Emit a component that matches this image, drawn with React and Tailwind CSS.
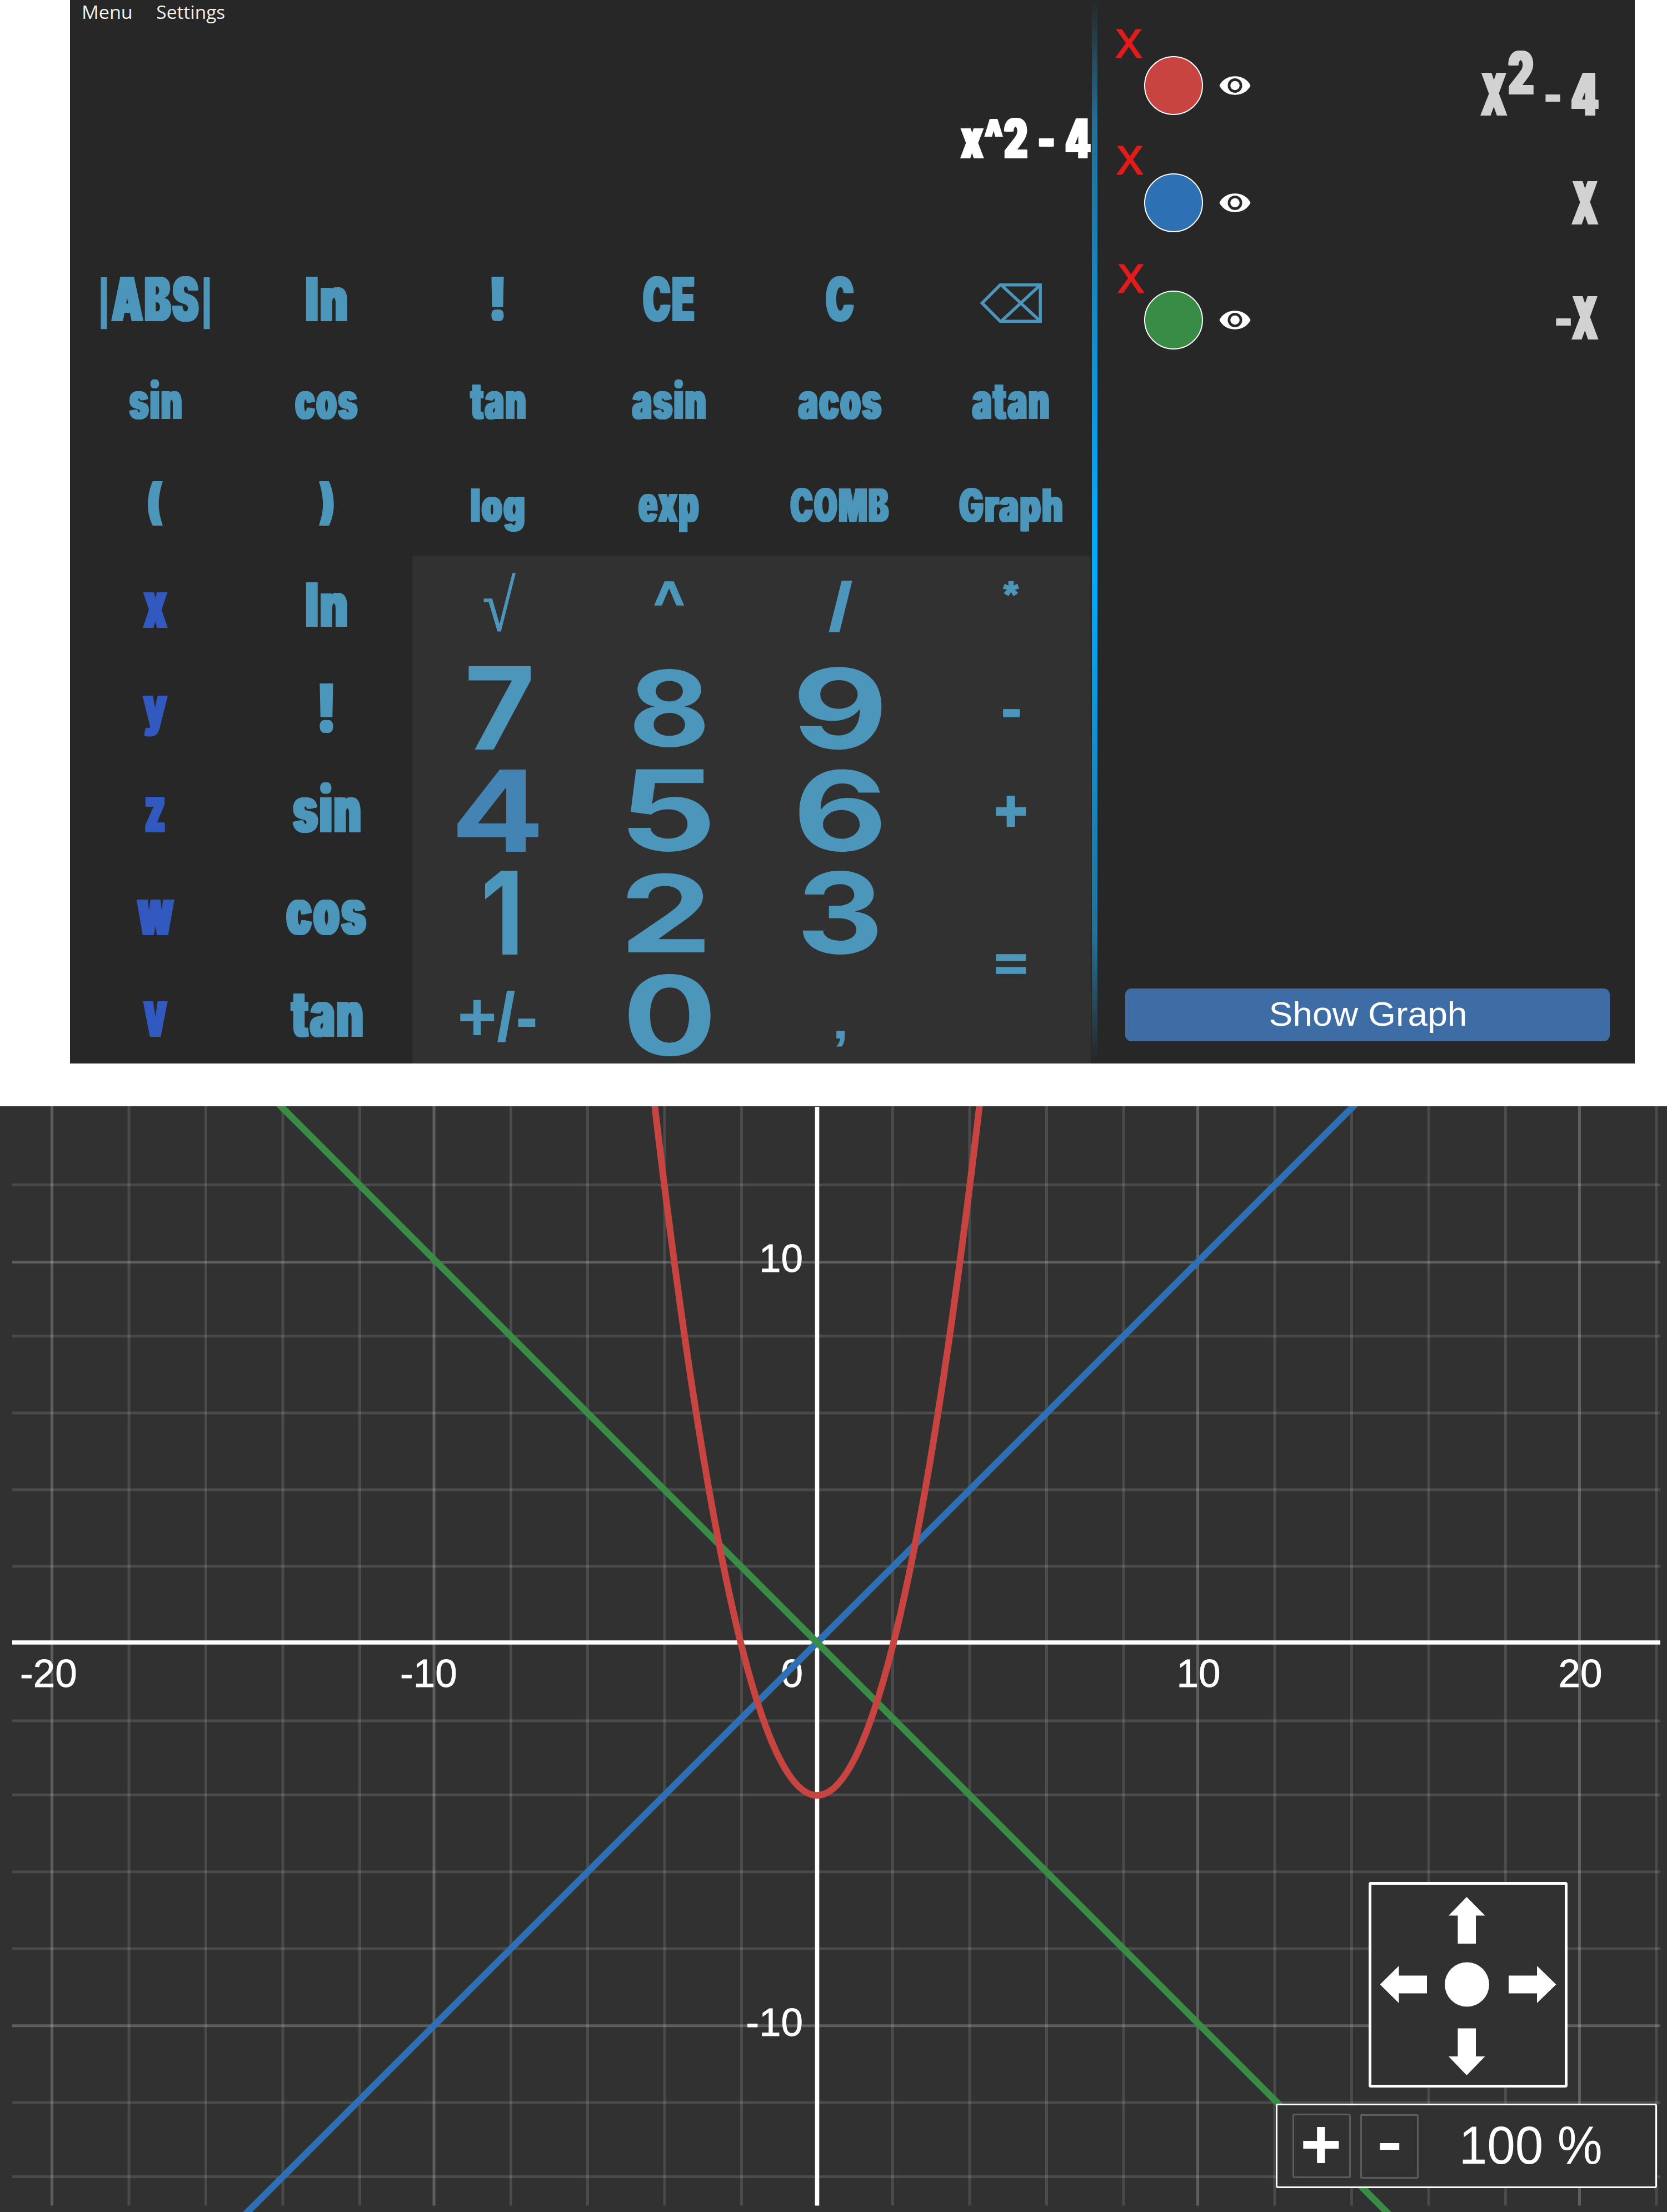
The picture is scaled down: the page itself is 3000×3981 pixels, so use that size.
import React from "react";

const FONTS = {
  heavy: {
    css: '900 100px "Inter"',
    cls: "font-['Inter'] font-black tracking-[5px] [text-shadow:2px_0_currentColor,-2px_0_currentColor,4px_0_currentColor,-4px_0_currentColor]",
    grow: 4,
    track: 5,
  },
  digit: { css: '700 100px "Inter"', cls: "font-['Inter'] font-bold" },
  sans: { css: '400 100px "Liberation Sans"', cls: "font-['Liberation_Sans'] font-normal" },
  bold: { css: '700 100px "Liberation Sans"', cls: "font-['Liberation_Sans'] font-bold" },
  thick: { css: '700 100px "Liberation Sans"', cls: "font-['Liberation_Sans'] font-bold [-webkit-text-stroke:4px_currentColor]", stroke: 4 },
  cross: { css: '400 100px "Liberation Sans"', cls: "font-['Liberation_Sans'] font-normal [-webkit-text-stroke:4px_currentColor]", stroke: 4 },
  serif: { css: '400 100px "Liberation Serif"', cls: "font-['Liberation_Serif'] font-normal [-webkit-text-stroke:1px_currentColor]", stroke: 1 },
  menu: { css: '400 100px "Open Sans"', cls: "font-['Open_Sans'] font-normal" },
};

const ctx = document.createElement("canvas").getContext("2d");
function measure(text, css) {
  ctx.font = css;
  return ctx.measureText(text);
}

/* Text whose ink is w wide; h is the height of `by` above the baseline, or of the whole ink when `by` is absent. */
function Fit({ text, w, h, by, font = "heavy", dx = 0, mt = 0, className = "" }) {
  const f = FONTS[font];
  const s = (f.stroke || 0) / 2;
  const grow = s + (f.grow || 0);
  const m = measure(text, f.css);
  const r = by ? measure(by, f.css) : m;
  const left = -m.actualBoundingBoxLeft - grow;
  const right = m.actualBoundingBoxRight + grow + (f.track || 0) * (text.length - 1);
  const asc = r.actualBoundingBoxAscent + s;
  const desc = (by ? 0 : m.actualBoundingBoxDescent) + s;
  const sx = w / (right - left);
  const sy = h / (asc + desc);
  const base = (m.fontBoundingBoxAscent - m.fontBoundingBoxDescent) / 2;
  const transform = `translate(${dx - left * sx}px, ${(asc - base) * sy}px) scale(${sx}, ${sy})`;
  return (
    <div className={`flex-none ${className}`} style={{ width: w, height: h, marginTop: mt }}>
      <span className={`block w-max origin-top-left text-[100px] leading-[0] whitespace-pre ${f.cls}`} style={{ transform }}>
        {text}
      </span>
    </div>
  );
}

/* t: label, w/h: ink size, b: bottom of the ink from the top of the key */
const KEYS = [
  { abs: true },
  { t: "ln", w: 75, h: 80, b: 131, by: "l" },
  { t: "!", w: 23, h: 80, b: 131 },
  { t: "CE", w: 93, h: 80, b: 131, by: "H" },
  { t: "C", w: 51, h: 80, b: 131, by: "H" },
  { back: true, end: 1 },

  { t: "sin", w: 95, h: 50, b: 122, by: "x" },
  { t: "cos", w: 113, h: 50, b: 122, by: "x" },
  { t: "tan", w: 101, h: 50, b: 122, by: "x" },
  { t: "asin", w: 133, h: 50, b: 122, by: "x" },
  { t: "acos", w: 151, h: 50, b: 122, by: "x" },
  { t: "atan", w: 139, h: 50, b: 122, by: "x", end: 1 },

  { t: "(", w: 27, h: 80, b: 131 },
  { t: ")", w: 27, h: 80, b: 131 },
  { t: "log", w: 97, h: 60, b: 123, by: "l" },
  { t: "exp", w: 109, h: 50, b: 123, by: "x" },
  { t: "COMB", w: 178, h: 60, b: 123, by: "H" },
  { t: "Graph", w: 186, h: 60, b: 123, by: "H", end: 1 },

  { t: "x", w: 45, h: 64, b: 131, v: 1 },
  { t: "ln", w: 75, h: 80, b: 129, by: "l" },
  { t: "√", w: 58, h: 107, b: 138, pad: 1, font: "serif", dx: 3 },
  { t: "^", w: 53, h: 44, b: 90, pad: 1, font: "thick" },
  { t: "/", w: 44, h: 93, b: 137, pad: 1, font: "bold" },
  { t: "*", w: 29, h: 27, b: 73, pad: 1, font: "thick", end: 1 },

  { t: "y", w: 46, h: 74, b: 142, v: 1 },
  { t: "!", w: 25, h: 89, b: 136 },
  { t: "7", w: 114, h: 151, b: 166, pad: 1, font: "digit", dx: 3 },
  { t: "8", w: 129, h: 141, b: 162, pad: 1, font: "digit" },
  { t: "9", w: 152, h: 151, b: 166, pad: 1, font: "digit" },
  { t: "-", w: 32, h: 15, b: 107, pad: 1, font: "bold", end: 1 },

  { t: "z", w: 36, h: 64, b: 131, v: 1 },
  { t: "sin", w: 123, h: 63, b: 131, by: "x" },
  { t: "4", w: 150, h: 149, b: 166, pad: 1, font: "digit", lit: 1 },
  { t: "5", w: 149, h: 149, b: 166, pad: 1, font: "digit" },
  { t: "6", w: 150, h: 149, b: 166, pad: 1, font: "digit" },
  { t: "+", w: 55, h: 56, b: 120, pad: 1, font: "thick", end: 1 },

  { t: "w", w: 69, h: 64, b: 132, v: 1 },
  { t: "cos", w: 145, h: 63, b: 131, by: "x" },
  { t: "1", w: 60, h: 152, b: 167, pad: 1, font: "digit", dx: 6 },
  { t: "2", w: 141, h: 143, b: 163, pad: 1, font: "digit", dx: -6 },
  { t: "3", w: 136, h: 152, b: 167, pad: 1, font: "digit", dx: -1 },
  { t: "=", w: 55, h: 35, b: 201, pad: 1, font: "thick", tall: 1, end: 1 },

  { t: "v", w: 45, h: 64, b: 131, v: 1 },
  { t: "tan", w: 131, h: 63, b: 131, by: "x" },
  { t: "+/-", w: 136, h: 93, b: 139, pad: 1, font: "bold" },
  { t: "0", w: 149, h: 148, b: 166, pad: 1, font: "digit" },
  { t: ",", w: 17, h: 29, b: 148, pad: 1, font: "bold" },
];

function Backspace() {
  return (
    <svg className="mt-[62px] h-[71px] w-[111px] flex-none" viewBox="0 0 111 71" fill="none" stroke="currentColor" strokeWidth="5.5">
      <path d="M3.5 35.5 36 2.8H108.2V68.2H36Z" />
      <path d="M38 3 108 68M38 68 108 3" />
    </svg>
  );
}

function Abs() {
  return (
    <div className="flex items-start gap-[7px]">
      <Fit text="|" font="bold" w={12} h={94} mt={51} dx={-1} />
      <Fit text="ABS" w={158} h={80} by="H" mt={51} dx={-1} />
      <Fit text="|" font="bold" w={12} h={94} mt={51} />
    </div>
  );
}

function Key({ k }) {
  const color = k.v ? "text-[#3259c0]" : k.lit ? "text-[#4484b4]" : "text-[#4b96ba]";
  let face = null;
  if (k.back) face = <Backspace />;
  else if (k.abs) face = <Abs />;
  else face = <Fit text={k.t} w={k.w} h={k.h} by={k.by} font={k.font} dx={(k.dx || 0) - (k.pad ? 0 : 1)} mt={k.b - k.h} />;
  return (
    <button className={`flex items-start justify-center ${k.pad ? "bg-[#313131]" : ""} ${k.tall ? "row-span-2" : ""} ${k.end ? "pl-[10px]" : ""} ${color}`}>
      {face}
    </button>
  );
}

function Eye() {
  return (
    <svg className="h-[34px] w-[57px] flex-none" viewBox="0 0 57 34">
      <path d="M0.5 17C5 7.500 15 0.300 28.500 0.300S52 7.500 56.500 17C52 26.500 42 33.700 28.500 33.700S5 26.500 0.500 17Z" fill="#fff" />
      <circle cx="28.500" cy="17" r="13" fill="#272727" />
      <circle cx="28.500" cy="17" r="8.300" fill="#fff" />
    </svg>
  );
}

function Row({ cross, dot, children }) {
  return (
    <div className="flex h-[211px] items-start text-[#d2d2d2]">
      <div className={`w-[50px] flex-none text-[#e31b1b] ${cross}`}>
        <Fit text="X" font="cross" w={47} h={51} />
      </div>
      <div className={`mt-[49px] size-[106px] flex-none rounded-full border-[2.5px] border-white ${dot}`} />
      <div className="mt-[85px] ml-[29px]">
        <Eye />
      </div>
      <div className="mr-[65px] ml-auto flex items-start">{children}</div>
    </div>
  );
}

function Calculator() {
  return (
    <section className="flex h-[1914px] w-[1837px] flex-none flex-col">
      <nav className="flex h-[46px] flex-none gap-[47px] pl-[24px] text-[#f0f0f0]">
        <Fit text="Menu" font="menu" w={86} h={24} by="M" mt={10} />
        <Fit text="Settings" font="menu" w={121} h={24} by="M" mt={10} />
      </nav>
      <div className="flex h-[402px] flex-none items-start justify-end pt-[167px] text-white">
        <Fit text="x^2 - 4" w={235} h={72} by="4" />
      </div>
      <div className="grid flex-none grid-cols-[repeat(5,308px)_297px] grid-rows-[repeat(7,184px)_178px]">
        {KEYS.map((k, i) => (
          <Key key={i} k={k} />
        ))}
      </div>
    </section>
  );
}

function Expressions() {
  return (
    <aside className="flex flex-1 flex-col pt-[52px]">
      <Row cross="mt-px ml-[33px] mr-[1px]" dot="bg-[#c74440]">
        <Fit text="X" w={49} h={77} mt={80} />
        <Fit text="2" w={46} h={79} mt={40} className="ml-px" />
        <Fit text="-" w={27} h={13} mt={119} className="ml-[21px]" />
        <Fit text="4" w={49} h={77} mt={80} className="ml-[20px]" />
      </Row>
      <Row cross="mt-0 ml-[35px] mr-[-1px]" dot="bg-[#2d70b3]">
        <Fit text="X" w={49} h={78} mt={64} />
      </Row>
      <Row cross="mt-[2px] ml-[37px] mr-[-3px]" dot="bg-[#388c46]">
        <Fit text="-" w={27} h={13} mt={100} />
        <Fit text="X" w={49} h={78} mt={60} className="ml-px" />
      </Row>
      <button className="mt-auto mr-[45px] mb-[40px] ml-[50px] flex h-[95px] items-start justify-center rounded-[11px] bg-[#3e6ca4] text-white">
        <Fit text="Show Graph" font="sans" w={351} h={45} by="h" mt={22} />
      </button>
    </aside>
  );
}

const OX = 1470.5;
const OY = 965;
const U = 68.8;
const COLS = [93.5, 232, 370.5, 509, 647.5, 781, 919.3, 1057.5, 1196, 1334.5, 1606.5, 1745, 1883.5, 2022, 2155.5, 2294, 2432.5, 2571, 2709.5, 2842.5, 2981];
const MAJOR_COLS = [93.5, 781, 2155.5, 2842.5];
const ROWS = [141.5, 280.5, 413.5, 552, 690, 828, 1106, 1239.3, 1377.8, 1516, 1654.8, 1793, 1926.5];
const MAJOR_ROWS = [280.5, 1654.8];

function Plot() {
  return (
    <svg className="block h-[1990px] w-[3000px]" viewBox="0 0 3000 1990">
      <g stroke="#fff" strokeWidth="5">
        {COLS.map((x) => (
          <line key={x} x1={x} x2={x} y1="0" y2="1978.500" strokeOpacity={MAJOR_COLS.includes(x) ? 0.22 : 0.12} />
        ))}
        {ROWS.map((y) => (
          <line key={y} x1="22" x2="2988" y1={y} y2={y} strokeOpacity={MAJOR_ROWS.includes(y) ? 0.22 : 0.12} />
        ))}
      </g>
      <g stroke="#fff" strokeWidth="7.600">
        <line x1={OX} x2={OX} y1="1" y2="1978.500" />
        <line x1="22" x2="2988" y1={OY} y2={OY} />
      </g>
      <g fill="#fff" stroke="#fff" strokeWidth="0.8" fontFamily="Liberation Sans, sans-serif" fontSize="71">
        <text x="36" y="1044.5">-20</text>
        <text x="720" y="1044.5">-10</text>
        <text x="1445" y="1044.5" textAnchor="end">0</text>
        <text x="2157" y="1044.5" textAnchor="middle">10</text>
        <text x="2844" y="1044.5" textAnchor="middle">20</text>
        <text x="1445" y="298" textAnchor="end">10</text>
        <text x="1445" y="1672.5" textAnchor="end">-10</text>
      </g>
      <g fill="none" strokeWidth="12">
        <line x1={OX - 1100} y1={OY + 1100} x2={OX + 1100} y2={OY - 1100} stroke="#2d70b3" />
        <line x1={OX - 1100} y1={OY - 1100} x2={OX + 1100} y2={OY + 1100} stroke="#388c46" />
        <path d={`M${OX - 5 * U} ${OY - 21 * U}Q${OX} ${OY + 29 * U} ${OX + 5 * U} ${OY - 21 * U}`} stroke="#c74440" />
      </g>
    </svg>
  );
}

function PanPad() {
  return (
    <div className="absolute top-[1396px] left-[2463px] h-[370px] w-[358px] rounded-[4px] border-[5px] border-white bg-[#313131]">
      <svg className="size-full" viewBox="5 5 348 360" fill="#fff">
        <path d="M176.500 27 209.500 60.500H193V111H160.500V60.500H144Z" />
        <path d="M176.500 348 209.500 314H193V263.500H160.500V314H144Z" />
        <path d="M20.500 184.500 54.500 151V168.500H105V200.500H54.500V218Z" />
        <path d="M337.500 184.500 303 151V168.500H252V200.500H303V218Z" />
        <circle cx="177" cy="184.500" r="40" />
      </svg>
    </div>
  );
}

function ZoomBar() {
  return (
    <div className="absolute top-[1795px] left-[2296px] flex h-[152px] w-[686px] items-start rounded-[4px] border-[3px] border-white bg-[#313131] text-white">
      <button className="mt-[15px] ml-[27px] flex h-[116px] w-[105px] items-start justify-center rounded-[3px] border-[3px] border-[#5c5c5c]">
        <Fit text="+" font="bold" w={65} h={65} mt={21} dx={-1} />
      </button>
      <button className="mt-[16px] ml-[17px] flex h-[116px] w-[105px] items-start justify-center rounded-[3px] border-[3px] border-[#5c5c5c]">
        <Fit text="-" font="bold" w={37} h={12} mt={49} />
      </button>
      <Fit text="100 %" font="sans" w={249} h={67} by="1" mt={38} className="ml-[79px]" />
    </div>
  );
}

export default function App() {
  return (
    <main className="h-[3981px] w-[3000px] overflow-hidden bg-white">
      <div className="ml-[126px] flex h-[1914px] w-[2816px] bg-[#272727]">
        <Calculator />
        <div className="ml-[2px] h-[1909px] w-[10px] flex-none bg-[linear-gradient(to_bottom,#272727_0%,#22729a_12%,#00aaff_50%,#00aaff_55%,#22729a_88%,#272727_100%)]" />
        <Expressions />
      </div>
      <div className="relative mt-[77px] h-[1990px] w-[3000px] bg-[#313131]">
        <Plot />
        <PanPad />
        <ZoomBar />
      </div>
    </main>
  );
}
